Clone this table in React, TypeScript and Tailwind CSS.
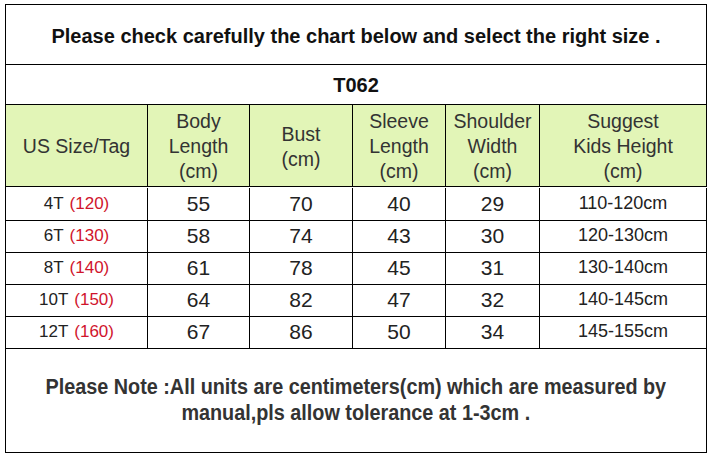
import React from "react";

const cols = "grid grid-cols-[142px_102px_103px_93px_94px_167px]";

const rows = [
  ["4T", "(120)", "55", "70", "40", "29", "110-120cm"],
  ["6T", "(130)", "58", "74", "43", "30", "120-130cm"],
  ["8T", "(140)", "61", "78", "45", "31", "130-140cm"],
  ["10T", "(150)", "64", "82", "47", "32", "140-145cm"],
  ["12T", "(160)", "67", "86", "50", "34", "145-155cm"],
];

export default function App() {
  return (
    <div className="w-[712px] h-[456px] bg-white pt-[4px] pl-[5px]" style={{ fontFamily: '"Liberation Sans", Arial, sans-serif' }}>
      <div className="w-[702px] border-l border-t border-black">
        <div className="h-[60px] border-r border-b border-black flex items-center justify-center text-[20px] font-bold text-[#111] pt-[2px]">
          Please check carefully the chart below and select the right size .
        </div>
        <div className="h-[40px] border-r border-b border-black flex items-center justify-center text-[20px] font-bold text-[#111]">
          T062
        </div>
        <div className={`${cols} h-[82px] bg-[#e2f5b7] text-[#333] text-[19.5px] leading-[25px]`}>
          <div className="border-r border-b border-black flex items-center justify-center text-center pt-[2px]">US Size/Tag</div>
          <div className="border-r border-b border-black flex items-center justify-center text-center pt-[2px]">Body<br />Length<br />(cm)</div>
          <div className="border-r border-b border-black flex items-center justify-center text-center pt-[2px]">Bust<br />(cm)</div>
          <div className="border-r border-b border-black flex items-center justify-center text-center pt-[2px]">Sleeve<br />Length<br />(cm)</div>
          <div className="border-r border-b border-black flex items-center justify-center text-center pt-[2px]">Shoulder<br />Width<br />(cm)</div>
          <div className="border-r border-b border-black flex items-center justify-center text-center pt-[2px]">Suggest<br />Kids Height<br />(cm)</div>
        </div>
        {rows.map((r) => (
          <div key={r[0]} className={`${cols} h-[32px] text-[#222] pt-[1px]`}>
            <div className="border-r border-b border-black flex items-center justify-center text-[17px]">
              {r[0]}<span className="ml-[6px] text-[#d0142c]">{r[1]}</span>
            </div>
            <div className="border-r border-b border-black flex items-center justify-center text-[21px]">{r[2]}</div>
            <div className="border-r border-b border-black flex items-center justify-center text-[21px]">{r[3]}</div>
            <div className="border-r border-b border-black flex items-center justify-center text-[21px]">{r[4]}</div>
            <div className="border-r border-b border-black flex items-center justify-center text-[21px]">{r[5]}</div>
            <div className="border-r border-b border-black flex items-center justify-center text-[18px]">{r[6]}</div>
          </div>
        ))}
        <div className="h-[106px] border-r border-b border-black flex items-center justify-center text-center text-[22px] leading-[26px] font-bold text-[#333]">
          <div className="scale-x-[0.9] whitespace-nowrap">
            Please Note :All units are centimeters(cm) which are measured by
            <br />
            manual,pls allow tolerance at 1-3cm .
          </div>
        </div>
      </div>
    </div>
  );
}
